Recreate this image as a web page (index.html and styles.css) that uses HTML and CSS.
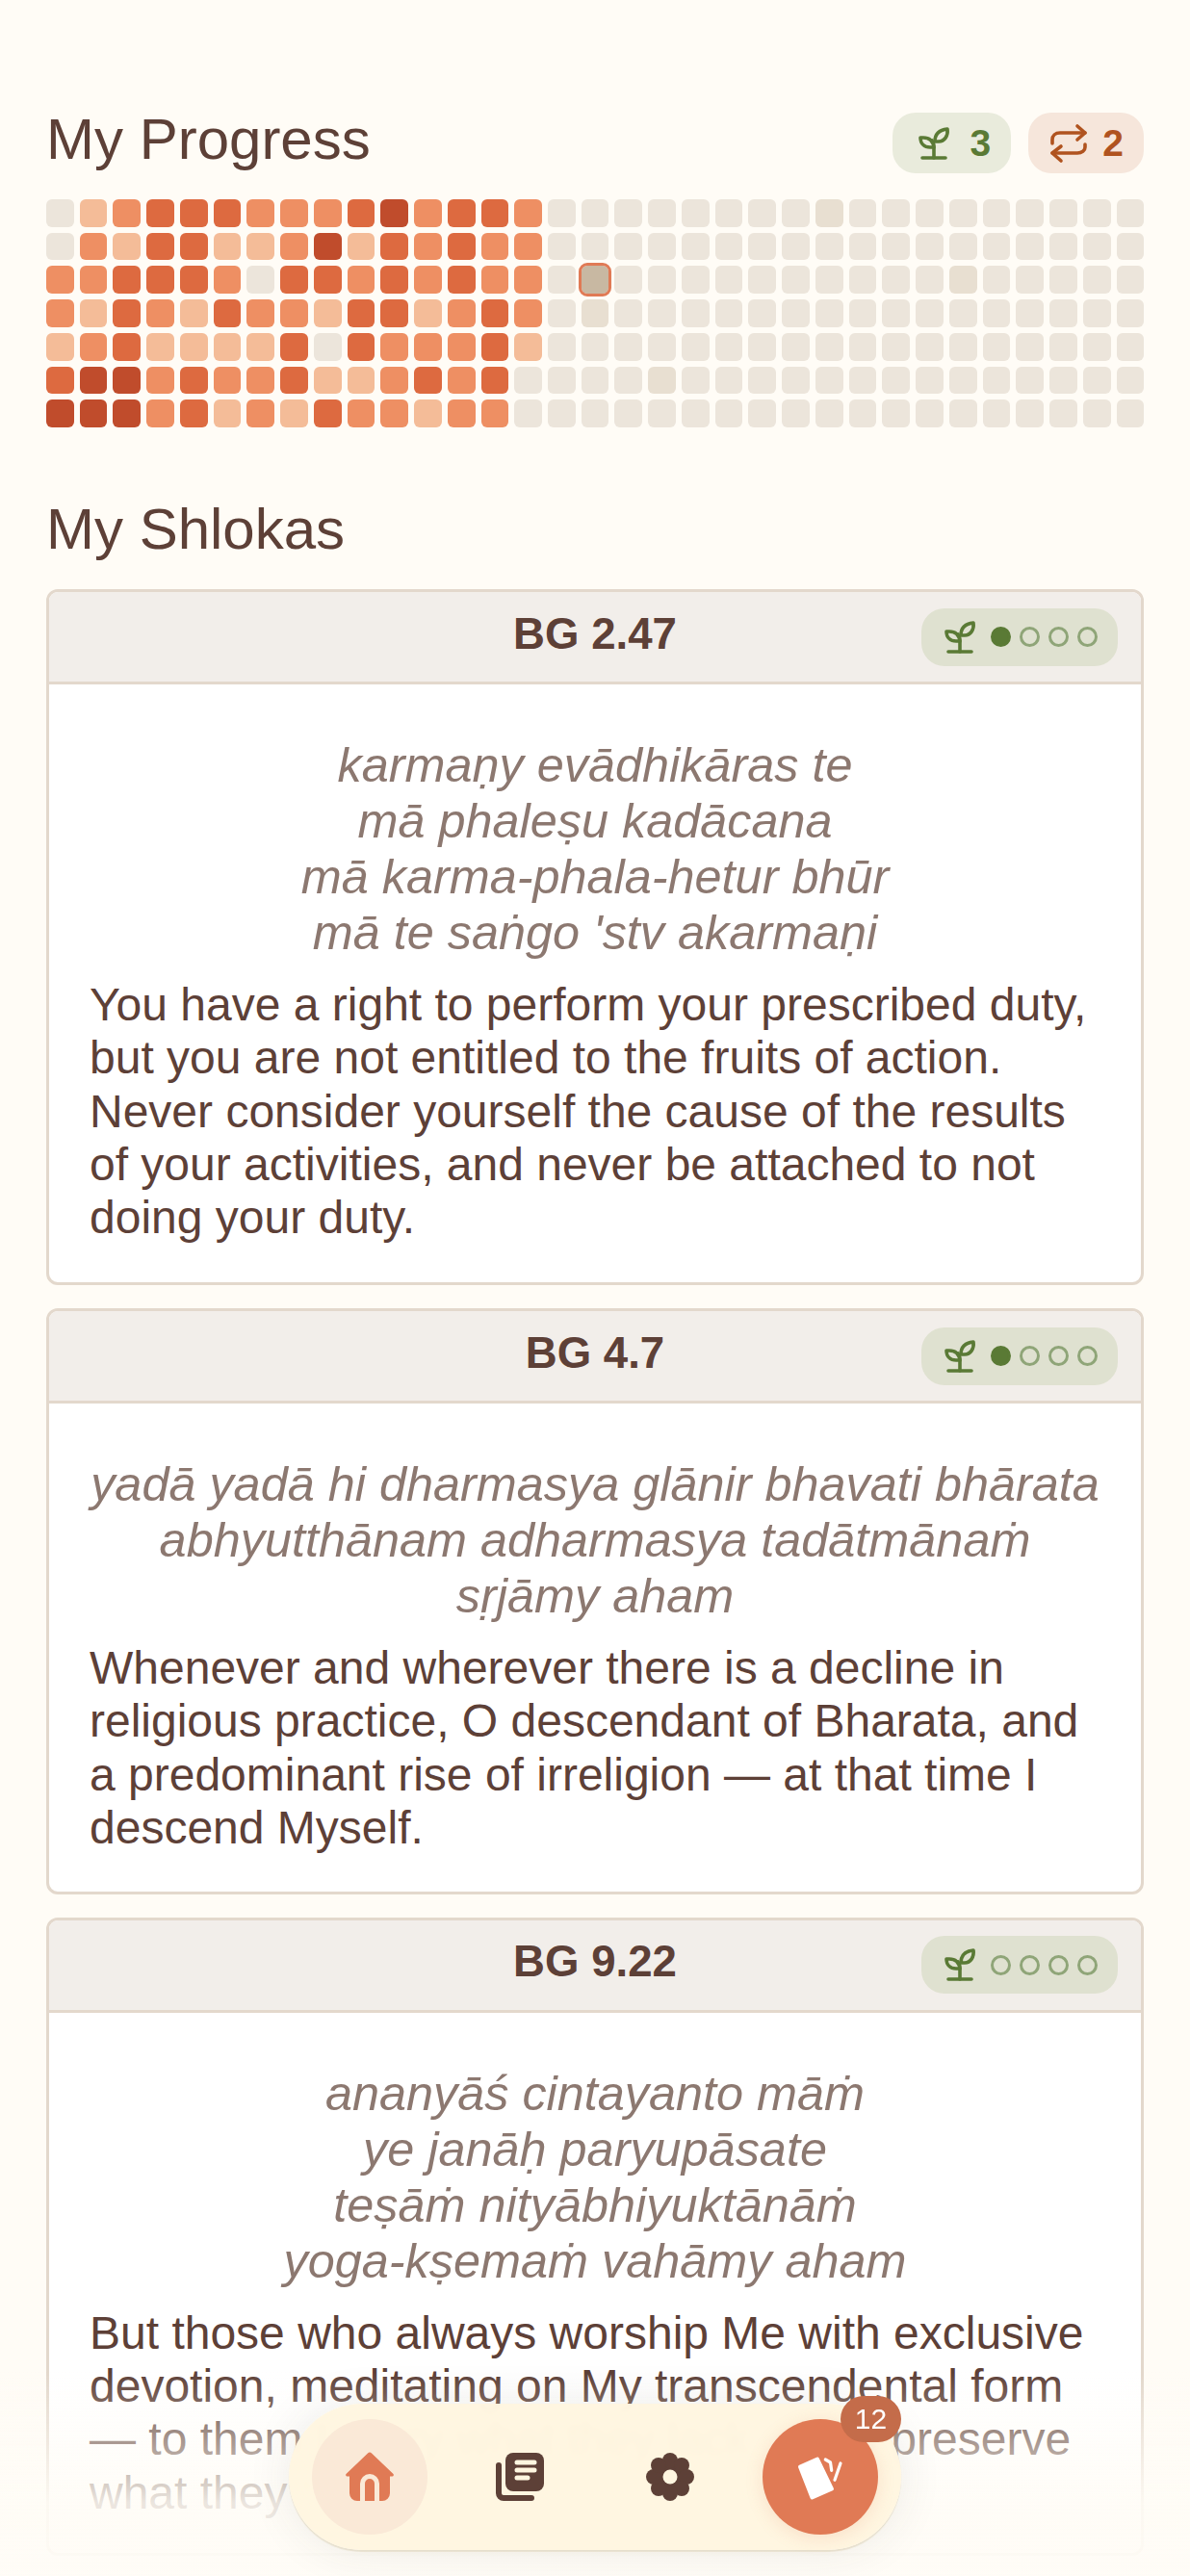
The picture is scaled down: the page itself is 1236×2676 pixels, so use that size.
FILE: index.html
```html
<!DOCTYPE html>
<html lang="en">
<head>
<meta charset="utf-8">
<title>My Progress</title>
<link rel="stylesheet" href="styles.css">
</head>
<body>
<svg class="defs" width="0" height="0" aria-hidden="true">
  <symbol id="sprout" viewBox="0 0 42 42">
    <g fill="none" stroke="currentColor" stroke-width="3.6" stroke-linecap="round" stroke-linejoin="round">
      <path d="M10 36H34"/>
      <path d="M22 36V25c0-3-.5-5-2-7"/>
      <path d="M8 15h3c6 0 10 3 11 10h-4c-6 0-10-4-10-10z"/>
      <path d="M23 19c0-7 4-12 13-13 1 7-3 13-9 13z"/>
    </g>
  </symbol>
  <symbol id="repeat" viewBox="0 0 42 42">
    <g fill="none" stroke="currentColor" stroke-width="3.6" stroke-linecap="round" stroke-linejoin="round">
      <path d="M30 3l8 7-8 7"/>
      <path d="M38 10H12c-5 0-8 3-8 7v4"/>
      <path d="M13 24l-9 7 9 8"/>
      <path d="M4 31h26c5 0 8-3 8-6v-3"/>
    </g>
  </symbol>
</svg>

<main class="page">
  <section class="progress-head">
    <h1 class="section-title progress-title">My Progress</h1>
    <div class="stats">
      <div class="stat stat-green"><svg class="stat-icon"><use href="#sprout"/></svg><span>3</span></div>
      <div class="stat stat-orange"><svg class="stat-icon"><use href="#repeat"/></svg><span>2</span></div>
    </div>
  </section>

  <div class="grid">
    <i class="c0"></i><i class="c1"></i><i class="c2"></i><i class="c3"></i><i class="c3"></i><i class="c3"></i><i class="c2"></i><i class="c2"></i><i class="c2"></i><i class="c3"></i><i class="c4"></i><i class="c2"></i><i class="c3"></i><i class="c3"></i><i class="c2"></i><i class="c0"></i><i class="c0"></i><i class="c0"></i><i class="c0"></i><i class="c0"></i><i class="c0"></i><i class="c0"></i><i class="c0"></i><i class="c5"></i><i class="c0"></i><i class="c0"></i><i class="c0"></i><i class="c0"></i><i class="c0"></i><i class="c0"></i><i class="c0"></i><i class="c0"></i><i class="c0"></i>
    <i class="c0"></i><i class="c2"></i><i class="c1"></i><i class="c3"></i><i class="c3"></i><i class="c1"></i><i class="c1"></i><i class="c2"></i><i class="c4"></i><i class="c1"></i><i class="c3"></i><i class="c2"></i><i class="c3"></i><i class="c2"></i><i class="c2"></i><i class="c0"></i><i class="c0"></i><i class="c0"></i><i class="c0"></i><i class="c0"></i><i class="c0"></i><i class="c0"></i><i class="c0"></i><i class="c0"></i><i class="c0"></i><i class="c0"></i><i class="c0"></i><i class="c0"></i><i class="c0"></i><i class="c0"></i><i class="c0"></i><i class="c0"></i><i class="c0"></i>
    <i class="c2"></i><i class="c2"></i><i class="c3"></i><i class="c3"></i><i class="c3"></i><i class="c2"></i><i class="c0"></i><i class="c3"></i><i class="c3"></i><i class="c2"></i><i class="c3"></i><i class="c2"></i><i class="c3"></i><i class="c2"></i><i class="c2"></i><i class="c0"></i><i class="today"></i><i class="c0"></i><i class="c0"></i><i class="c0"></i><i class="c0"></i><i class="c0"></i><i class="c0"></i><i class="c0"></i><i class="c0"></i><i class="c0"></i><i class="c0"></i><i class="c5"></i><i class="c0"></i><i class="c0"></i><i class="c0"></i><i class="c0"></i><i class="c0"></i>
    <i class="c2"></i><i class="c1"></i><i class="c3"></i><i class="c2"></i><i class="c1"></i><i class="c3"></i><i class="c2"></i><i class="c2"></i><i class="c1"></i><i class="c3"></i><i class="c3"></i><i class="c1"></i><i class="c2"></i><i class="c3"></i><i class="c2"></i><i class="c0"></i><i class="c5"></i><i class="c0"></i><i class="c0"></i><i class="c0"></i><i class="c0"></i><i class="c0"></i><i class="c0"></i><i class="c0"></i><i class="c0"></i><i class="c0"></i><i class="c0"></i><i class="c0"></i><i class="c0"></i><i class="c0"></i><i class="c0"></i><i class="c0"></i><i class="c0"></i>
    <i class="c1"></i><i class="c2"></i><i class="c3"></i><i class="c1"></i><i class="c1"></i><i class="c1"></i><i class="c1"></i><i class="c3"></i><i class="c0"></i><i class="c3"></i><i class="c2"></i><i class="c2"></i><i class="c2"></i><i class="c3"></i><i class="c1"></i><i class="c0"></i><i class="c0"></i><i class="c0"></i><i class="c0"></i><i class="c0"></i><i class="c0"></i><i class="c0"></i><i class="c0"></i><i class="c0"></i><i class="c0"></i><i class="c0"></i><i class="c0"></i><i class="c0"></i><i class="c0"></i><i class="c0"></i><i class="c0"></i><i class="c0"></i><i class="c0"></i>
    <i class="c3"></i><i class="c4"></i><i class="c4"></i><i class="c2"></i><i class="c3"></i><i class="c2"></i><i class="c2"></i><i class="c3"></i><i class="c1"></i><i class="c1"></i><i class="c2"></i><i class="c3"></i><i class="c2"></i><i class="c3"></i><i class="c0"></i><i class="c0"></i><i class="c0"></i><i class="c0"></i><i class="c5"></i><i class="c0"></i><i class="c0"></i><i class="c0"></i><i class="c0"></i><i class="c0"></i><i class="c0"></i><i class="c0"></i><i class="c0"></i><i class="c0"></i><i class="c0"></i><i class="c0"></i><i class="c0"></i><i class="c0"></i><i class="c0"></i>
    <i class="c4"></i><i class="c4"></i><i class="c4"></i><i class="c2"></i><i class="c3"></i><i class="c1"></i><i class="c2"></i><i class="c1"></i><i class="c3"></i><i class="c2"></i><i class="c2"></i><i class="c1"></i><i class="c2"></i><i class="c2"></i><i class="c0"></i><i class="c0"></i><i class="c0"></i><i class="c0"></i><i class="c0"></i><i class="c0"></i><i class="c0"></i><i class="c0"></i><i class="c0"></i><i class="c0"></i><i class="c0"></i><i class="c0"></i><i class="c0"></i><i class="c0"></i><i class="c0"></i><i class="c0"></i><i class="c0"></i><i class="c0"></i><i class="c0"></i>
  </div>

  <h2 class="section-title shlokas-title">My Shlokas</h2>

  <div class="cards">
    <article class="card">
      <header class="card-head">
        <h3 class="card-ref">BG 2.47</h3>
        <div class="mastery"><svg class="mastery-icon"><use href="#sprout"/></svg><b class="dot on"></b><b class="dot"></b><b class="dot"></b><b class="dot"></b></div>
      </header>
      <div class="card-body">
        <p class="verse">karmaṇy evādhikāras te<br>mā phaleṣu kadācana<br>mā karma-phala-hetur bhūr<br>mā te saṅgo 'stv akarmaṇi</p>
        <p class="meaning">You have a right to perform your prescribed duty, but you are not entitled to the fruits of action. Never consider yourself the cause of the results of your activities, and never be attached to not doing your duty.</p>
      </div>
    </article>

    <article class="card">
      <header class="card-head">
        <h3 class="card-ref">BG 4.7</h3>
        <div class="mastery"><svg class="mastery-icon"><use href="#sprout"/></svg><b class="dot on"></b><b class="dot"></b><b class="dot"></b><b class="dot"></b></div>
      </header>
      <div class="card-body">
        <p class="verse">yadā yadā hi dharmasya glānir bhavati bhārata<br>abhyutthānam adharmasya tadātmānaṁ<br>sṛjāmy aham</p>
        <p class="meaning">Whenever and wherever there is a decline in religious practice, O descendant of Bharata, and a predominant rise of irreligion — at that time I descend Myself.</p>
      </div>
    </article>

    <article class="card">
      <header class="card-head">
        <h3 class="card-ref">BG 9.22</h3>
        <div class="mastery"><svg class="mastery-icon"><use href="#sprout"/></svg><b class="dot"></b><b class="dot"></b><b class="dot"></b><b class="dot"></b></div>
      </header>
      <div class="card-body">
        <p class="verse">ananyāś cintayanto māṁ<br>ye janāḥ paryupāsate<br>teṣāṁ nityābhiyuktānāṁ<br>yoga-kṣemaṁ vahāmy aham</p>
        <p class="meaning">But those who always worship Me with exclusive devotion, meditating on My transcendental form — to them I carry what they lack, and I preserve what they have.</p>
      </div>
    </article>
  </div>
</main>

<div class="fade"></div>

<nav class="nav">
  <a class="nav-btn nav-home">
    <svg class="nav-icon" viewBox="-30 -30 60 60">
      <path class="home-shape" d="M-2-24.500a3 3 0 0 1 4 0L24.500-3a1.500 1.500 0 0 1-1 2.500H21V17a8 8 0 0 1-8 8H-13a8 8 0 0 1-8-8V-.5h-2.500a1.500 1.500 0 0 1-1-2.500z"/>
      <path class="home-door" d="M-7.500 26V7a7.500 7.500 0 0 1 15 0V26"/>
    </svg>
  </a>
  <a class="nav-btn">
    <svg class="nav-icon" viewBox="-30 -30 60 60">
      <path class="book-back" d="M-22-12V17a5 5 0 0 0 5 5H12"/>
      <rect class="book-front" x="-15" y="-25" width="40" height="40" rx="8"/>
      <path class="book-lines" d="M-3-15H15M-3-7H15M-3 1H8"/>
    </svg>
  </a>
  <a class="nav-btn">
    <svg class="nav-icon" viewBox="-30 -30 60 60">
      <g class="gear">
        <circle r="18"/>
        <circle cy="-17" r="8"/><circle cx="12" cy="-12" r="8"/><circle cx="17" r="8"/><circle cx="12" cy="12" r="8"/>
        <circle cy="17" r="8"/><circle cx="-12" cy="12" r="8"/><circle cx="-17" r="8"/><circle cx="-12" cy="-12" r="8"/>
      </g>
      <circle class="gear-hole" r="7.500"/>
    </svg>
  </a>
  <a class="nav-btn nav-cards">
    <svg class="nav-icon" viewBox="-30 -30 60 60">
      <path class="card-front" d="M-21-10.500L-3-18.500L12 12.500L-8.500 21.500z"/>
      <path class="card-side" d="M5.300-18L10.500-15L11.700-6.700M21-14L15 3.300"/>
    </svg>
    <span class="badge">12</span>
  </a>
</nav>
</body>
</html>
```

FILE: styles.css
```css
* { box-sizing: border-box; }

html, body {
  margin: 0;
  height: 2676px;
  overflow: hidden;
  background: #fffcf6;
  color: #5d4037;
  font-family: "Liberation Sans", Arial, sans-serif;
}

.defs { position: absolute; }

.page {
  height: 2676px;
  padding: 108px 48px 0;
  overflow: hidden;
}

.progress-head {
  display: flex;
  align-items: flex-start;
  justify-content: space-between;
  margin-bottom: 27px;
}

.section-title {
  margin: 0;
  font-size: 60px;
  font-weight: 400;
  line-height: 69px;
}

.progress-title { margin-top: 2px; }

.stats { display: flex; gap: 18px; margin-top: 9px; }

.stat {
  display: flex;
  align-items: center;
  height: 63px;
  padding: 0 21px;
  border-radius: 24px;
  font-size: 39px;
  font-weight: 700;
}

.stat-green { background: #e9ebdc; color: #5a7a35; gap: 18px; }
.stat-orange { background: #f6e6db; color: #b0531f; gap: 14px; }
.stat-icon { width: 42px; height: 42px; }

.grid {
  display: grid;
  grid-template-columns: repeat(33, 1fr);
  gap: 6px;
}

.grid i {
  display: block;
  aspect-ratio: 1;
  border-radius: 6px;
}

.c0 { background: #ece5db; }
.c1 { background: #f4bc98; }
.c2 { background: #ee8f63; }
.c3 { background: #dd6a40; }
.c4 { background: #c04c2c; }
.c5 { background: #e8dfd1; }

.grid .today {
  background: #c8b8a2;
  outline: 3px solid #e07a55;
  border-radius: 6px;
}

.shlokas-title { margin: 71px 0 28px; }

.cards { display: flex; flex-direction: column; gap: 24px; }

.card {
  border: 3px solid #e3d8cc;
  border-radius: 12px;
  background: #ffffff;
  overflow: hidden;
}

.card-head {
  position: relative;
  display: flex;
  align-items: center;
  justify-content: flex-end;
  height: 96px;
  padding: 0 24px;
  background: #f2eeea;
  border-bottom: 3px solid #e3d8cc;
}

.card-ref {
  position: absolute;
  left: 0;
  right: 0;
  margin: 0;
  text-align: center;
  font-size: 45.600px;
  line-height: 52px;
  font-weight: 700;
  transform: translateY(-3px);
}

.mastery {
  display: flex;
  align-items: center;
  gap: 9px;
  height: 60px;
  padding: 0 21px;
  border-radius: 24px;
  background: #dfe1d0;
  color: #5a7a35;
}

.mastery-icon { width: 42px; height: 42px; margin-right: 3px; margin-left: -3px; }

.dot {
  width: 21px;
  height: 21px;
  border-radius: 50%;
  border: 3px solid #8fa578;
}

.dot.on { background: #5a7a35; border-color: #5a7a35; }

.card-body { padding: 55px 42px 39px; }
.card:first-child .card-body { padding-bottom: 40px; }
.card:last-child .card-body { padding-bottom: 35px; }

.verse {
  margin: 0 0 18px;
  text-align: center;
  font-size: 50.400px;
  line-height: 58px;
  font-style: italic;
  color: #8c7870;
}

.meaning {
  margin: 0;
  font-size: 48px;
  line-height: 55.200px;
}

.fade {
  position: fixed;
  left: 0;
  right: 0;
  bottom: 0;
  height: 212px;
  background: linear-gradient(to bottom, rgba(255, 252, 246, 0) 0%, rgba(255, 252, 246, .88) 64%, rgba(255, 252, 246, .95) 100%);
}

.nav {
  position: fixed;
  left: 300px;
  bottom: 27px;
  width: 636px;
  height: 152px;
  display: flex;
  justify-content: space-between;
  align-items: center;
  padding: 0 24px;
  border-radius: 76px;
  background: rgba(255, 246, 224, .97);
  backdrop-filter: blur(4px);
  box-shadow: 0 2px 1px rgba(200, 185, 150, .35), 0 0 48px rgba(60, 50, 40, .09);
}

.nav-btn {
  position: relative;
  display: flex;
  align-items: center;
  justify-content: center;
  width: 120px;
  height: 120px;
  border-radius: 50%;
  color: #5d4037;
}

.nav-home { background: #fae9d7; }
.nav-cards { background: #e07a55; box-shadow: 0 4px 18px rgba(224, 122, 85, .18); }
.nav-icon { width: 60px; height: 60px; overflow: visible; }

.home-shape { fill: #e07a55; }
.home-door { fill: none; stroke: #fae9d7; stroke-width: 5; }

.book-back { fill: none; stroke: #5d4037; stroke-width: 6; stroke-linecap: round; }
.book-front { fill: #5d4037; }
.book-lines { fill: none; stroke: #fff6e0; stroke-width: 5; stroke-linecap: round; }

.gear { fill: #5d4037; }
.gear-hole { fill: #fff6e0; }

.card-front { fill: #fff; stroke: #fff; stroke-width: 4; stroke-linejoin: round; }
.card-side { fill: none; stroke: #fff; stroke-width: 3.200; stroke-linecap: round; stroke-linejoin: round; }

.badge {
  position: absolute;
  top: -24px;
  right: -24px;
  width: 63px;
  height: 48px;
  border-radius: 24px;
  background: #c46c4a;
  color: #fff;
  font-size: 30px;
  line-height: 48px;
  text-align: center;
}
```
